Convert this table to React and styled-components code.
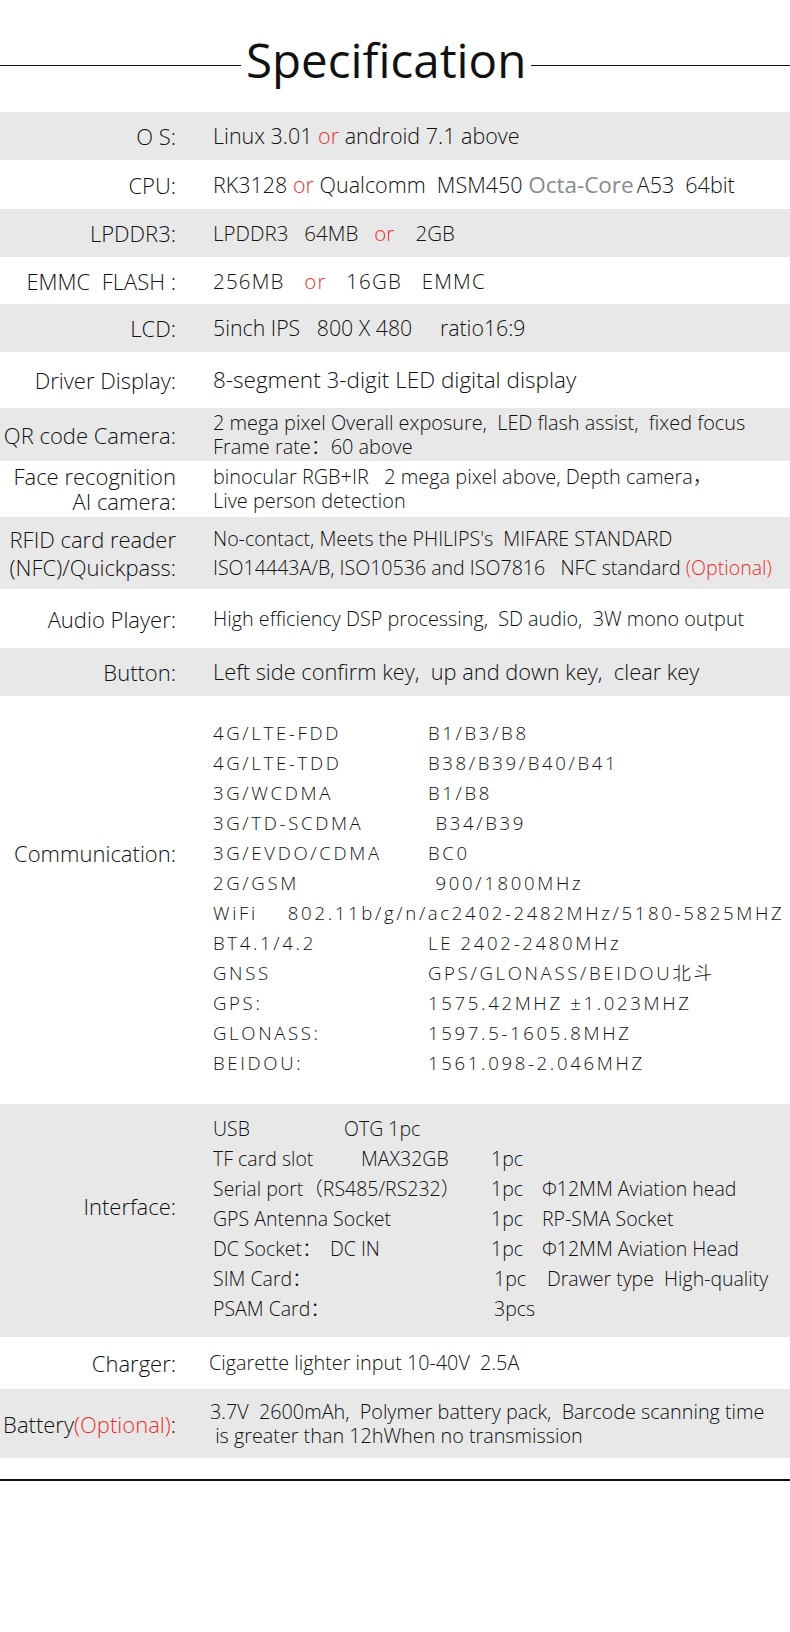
import React from 'react';
import styled, { createGlobalStyle } from 'styled-components';

const RED = '#e8302c';

const GlobalStyle = createGlobalStyle`
  html, body {
    margin: 0;
    padding: 0;
    background: #fff;
  }
  body {
    font-family: 'Open Sans', 'Noto Sans', 'Noto Sans CJK SC', sans-serif;
    font-weight: 300;
    color: #111;
  }
`;

const Page = styled.div`
  width: 790px;
  height: 1632px;
  overflow: hidden;
`;

const Header = styled.header`
  display: flex;
  align-items: center;
  padding-top: 36px;
  margin-bottom: 29px;
`;

const Rule = styled.div`
  flex: ${(p) => (p.$w ? `0 0 ${p.$w}px` : '1')};
  height: 1px;
  background: #111;
  margin-top: 12px;
`;

const Title = styled.h1`
  margin: 0 5px;
  font-size: 47.5px;
  line-height: 47px;
  font-weight: 400;
  color: #111;
`;

const Row = styled.div`
  display: grid;
  grid-template-columns: 176px 1fr;
  column-gap: 37px;
  align-items: center;
  height: ${(p) => p.$h}px;
  background: ${(p) => (p.$shade ? '#e8e8e8' : '#fff')};
`;

const Label = styled.div`
  text-align: right;
  font-size: 22px;
  line-height: ${(p) => p.$lh || 26}px;
  white-space: pre;
  align-self: ${(p) => (p.$top != null ? 'start' : 'center')};
  padding-top: ${(p) => p.$top || 0}px;
`;

const Value = styled.div`
  font-size: ${(p) => p.$size || 21.5}px;
  letter-spacing: ${(p) => p.$ls || 0}px;
  line-height: ${(p) => p.$lh || 26}px;
  margin-left: ${(p) => p.$indent || 0}px;
  white-space: pre;
`;

const Red = styled.span`
  color: ${RED};
`;

const Muted = styled.span`
  color: #8a8a8a;
  font-size: 22.5px;
  font-weight: 400;
  margin-right: 3px;
`;

const Bands = styled.div`
  padding: 22px 0 26px;
  font-size: 18.6px;
  letter-spacing: 2.65px;
`;

const BandLine = styled.div`
  display: grid;
  grid-template-columns: 215px auto;
  height: 30px;
  line-height: 30px;
  white-space: pre;
`;

const Ports = styled.div`
  padding: 10px 0 14px;
  font-size: 19.5px;
`;

const PortLine = styled.div`
  display: grid;
  grid-template-columns: ${(p) => (p.$shift ? '281px 53px' : '278px 51px')} auto;
  height: 30px;
  line-height: 30px;
  white-space: pre;
`;

const PortName = styled.span`
  display: inline-block;
  width: ${(p) => p.$w}px;
`;

const Footer = styled.div`
  margin-top: 21px;
  height: 2px;
  background: #111;
`;

const bands = [
  ['4G/LTE-FDD', 'B1/B3/B8'],
  ['4G/LTE-TDD', 'B38/B39/B40/B41'],
  ['3G/WCDMA', 'B1/B8'],
  ['3G/TD-SCDMA', ' B34/B39'],
  ['3G/EVDO/CDMA', 'BC0'],
  ['2G/GSM', ' 900/1800MHz'],
  ['WiFi    802.11b/g/n/ac2402-2482MHz/5180-5825MHZ'],
  ['BT4.1/4.2', 'LE 2402-2480MHz'],
  ['GNSS', 'GPS/GLONASS/BEIDOU北斗'],
  ['GPS:', '1575.42MHZ ±1.023MHZ'],
  ['GLONASS:', '1597.5-1605.8MHZ'],
  ['BEIDOU:', '1561.098-2.046MHZ'],
];

const ports = [
  { name: 'USB', w: 131, extra: 'OTG 1pc' },
  { name: 'TF card slot', w: 148, extra: 'MAX32GB', qty: '1pc' },
  { name: 'Serial port（RS485/RS232）', qty: '1pc', note: 'Φ12MM Aviation head' },
  { name: 'GPS Antenna Socket', qty: '1pc', note: 'RP-SMA Socket' },
  { name: 'DC Socket：', w: 117, extra: 'DC IN', qty: '1pc', note: 'Φ12MM Aviation Head' },
  { name: 'SIM Card：', qty: '1pc', note: 'Drawer type  High-quality', shift: true },
  { name: 'PSAM Card：', qty: '3pcs', shift: true },
];

const App = () => (
  <Page>
    <GlobalStyle />
    <Header>
      <Rule $w={241} />
      <Title>Specification</Title>
      <Rule />
    </Header>

    <Row $h={48} $shade>
      <Label>O S:</Label>
      <Value>
        Linux 3.01 <Red>or</Red> android 7.1 above
      </Value>
    </Row>
    <Row $h={49}>
      <Label>CPU:</Label>
      <Value>
        RK3128 <Red>or</Red> Qualcomm  MSM450 <Muted>Octa-Core</Muted>A53  64bit
      </Value>
    </Row>
    <Row $h={48} $shade>
      <Label>LPDDR3:</Label>
      <Value $size={20.5}>
        LPDDR3   64MB   <Red>or</Red>    2GB
      </Value>
    </Row>
    <Row $h={47}>
      <Label>EMMC  FLASH :</Label>
      <Value $size={20.5} $ls={1.2}>
        256MB   <Red>or</Red>   16GB   EMMC
      </Value>
    </Row>
    <Row $h={48} $shade>
      <Label>LCD:</Label>
      <Value $size={21.3}>5inch IPS   800 X 480     ratio16:9</Value>
    </Row>
    <Row $h={56}>
      <Label>Driver Display:</Label>
      <Value $size={22.5}>8-segment 3-digit LED digital display</Value>
    </Row>
    <Row $h={53} $shade>
      <Label>QR code Camera:</Label>
      <Value $size={19.9} $lh={24}>
        {'2 mega pixel Overall exposure,  LED flash assist,  fixed focus\nFrame rate：60 above'}
      </Value>
    </Row>
    <Row $h={56}>
      <Label $lh={25}>{'Face recognition\nAI camera:'}</Label>
      <Value $size={19.9} $lh={24}>
        {'binocular RGB+IR   2 mega pixel above, Depth camera，\nLive person detection'}
      </Value>
    </Row>
    <Row $h={72} $shade>
      <Label $lh={28}>{'RFID card reader\n(NFC)/Quickpass:'}</Label>
      <Value $size={19.6} $lh={29}>
        {"No-contact, Meets the PHILIPS's  MIFARE STANDARD\nISO14443A/B, ISO10536 and ISO7816   NFC standard "}
        <Red>(Optional)</Red>
      </Value>
    </Row>
    <Row $h={59}>
      <Label>Audio Player:</Label>
      <Value $size={19.8}>High efficiency DSP processing,  SD audio,  3W mono output</Value>
    </Row>
    <Row $h={48} $shade>
      <Label>Button:</Label>
      <Value $size={21.8}>Left side confirm key,  up and down key,  clear key</Value>
    </Row>
    <Row $h={408}>
      <Label $top={142} $lh={30}>Communication:</Label>
      <Bands>
        {bands.map(([a, b]) => (
          <BandLine key={a}>
            <span>{a}</span>
            {b && <span>{b}</span>}
          </BandLine>
        ))}
      </Bands>
    </Row>
    <Row $h={233} $shade>
      <Label $top={87} $lh={30}>Interface:</Label>
      <Ports>
        {ports.map((p) => (
          <PortLine key={p.name} $shift={p.shift}>
            <span>
              {p.w ? <PortName $w={p.w}>{p.name}</PortName> : p.name}
              {p.extra}
            </span>
            <span>{p.qty}</span>
            <span>{p.note}</span>
          </PortLine>
        ))}
      </Ports>
    </Row>
    <Row $h={52}>
      <Label>Charger:</Label>
      <Value $size={19.8} $indent={-4}>Cigarette lighter input 10-40V  2.5A</Value>
    </Row>
    <Row $h={69} $shade>
      <Label>
        Battery<Red>(Optional)</Red>:
      </Label>
      <Value $size={19.8} $lh={24} $indent={-3}>
        {'3.7V  2600mAh,  Polymer battery pack,  Barcode scanning time\n is greater than 12hWhen no transmission'}
      </Value>
    </Row>
    <Footer />
  </Page>
);

export default App;
